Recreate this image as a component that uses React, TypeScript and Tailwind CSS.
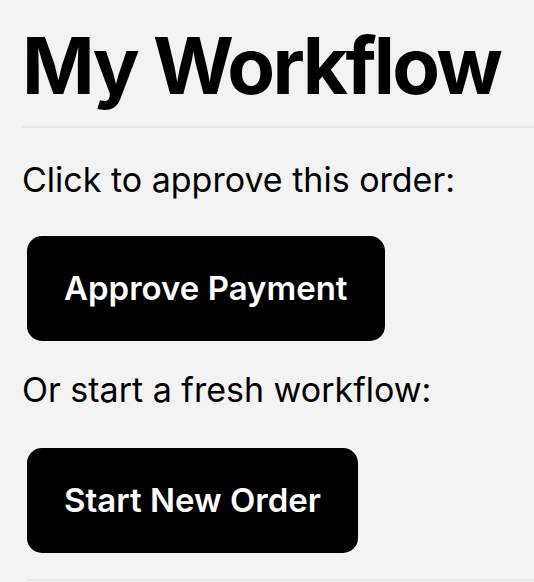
export default function App() {
  return (
    <div className="min-h-screen bg-[#f3f3f3] pl-[22px] font-['Inter',sans-serif] text-black">
      <h1 className="whitespace-nowrap pt-[18px] text-[78px] font-bold leading-[96px] tracking-[-0.034em]">
        My Workflow
      </h1>
      <hr className="mt-[12px] border-t-2 border-[#e8e8e8]" />
      <p className="mt-[32px] text-[34px] leading-[40px]">Click to approve this order:</p>
      <button
        type="button"
        className="ml-[5px] mt-[36px] flex h-[105px] items-center rounded-[15px] bg-black px-[37px] text-[33px] font-semibold text-white"
      >
        Approve Payment
      </button>
      <p className="mt-[29px] text-[34px] leading-[40px]">Or start a fresh workflow:</p>
      <button
        type="button"
        className="ml-[5px] mt-[38px] flex h-[105px] items-center rounded-[15px] bg-black px-[37px] text-[33px] font-semibold text-white"
      >
        Start New Order
      </button>
      <hr className="ml-[5px] mt-[26px] border-t-2 border-[#e8e8e8]" />
    </div>
  );
}
